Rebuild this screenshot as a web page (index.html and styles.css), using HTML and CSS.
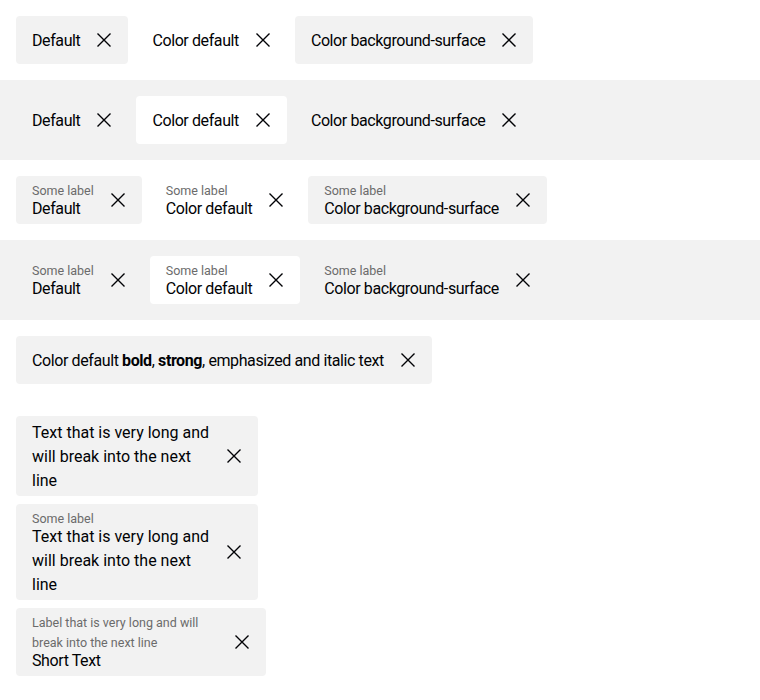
FILE: index.html
```html
<!DOCTYPE html>
<html lang="en">
<head>
<meta charset="utf-8">
<link rel="stylesheet" href="styles.css">
</head>
<body>
<div class="section">
  <button class="tag tag--surface"><span class="content"><span class="text">Default</span></span><svg class="x" viewBox="0 0 24 24"><path d="M5.5 5.5l13 13M18.5 5.5l-13 13"/></svg></button>
  <button class="tag tag--base"><span class="content"><span class="text">Color default</span></span><svg class="x" viewBox="0 0 24 24"><path d="M5.5 5.5l13 13M18.5 5.5l-13 13"/></svg></button>
  <button class="tag tag--surface"><span class="content"><span class="text">Color background-surface</span></span><svg class="x" viewBox="0 0 24 24"><path d="M5.5 5.5l13 13M18.5 5.5l-13 13"/></svg></button>
</div>
<div class="section section--grey">
  <button class="tag tag--surface"><span class="content"><span class="text">Default</span></span><svg class="x" viewBox="0 0 24 24"><path d="M5.5 5.5l13 13M18.5 5.5l-13 13"/></svg></button>
  <button class="tag tag--base"><span class="content"><span class="text">Color default</span></span><svg class="x" viewBox="0 0 24 24"><path d="M5.5 5.5l13 13M18.5 5.5l-13 13"/></svg></button>
  <button class="tag tag--surface"><span class="content"><span class="text">Color background-surface</span></span><svg class="x" viewBox="0 0 24 24"><path d="M5.5 5.5l13 13M18.5 5.5l-13 13"/></svg></button>
</div>
<div class="section">
  <button class="tag tag--surface"><span class="content"><span class="label">Some label</span><span class="text">Default</span></span><svg class="x" viewBox="0 0 24 24"><path d="M5.5 5.5l13 13M18.5 5.5l-13 13"/></svg></button>
  <button class="tag tag--base"><span class="content"><span class="label">Some label</span><span class="text">Color default</span></span><svg class="x" viewBox="0 0 24 24"><path d="M5.5 5.5l13 13M18.5 5.5l-13 13"/></svg></button>
  <button class="tag tag--surface"><span class="content"><span class="label">Some label</span><span class="text">Color background-surface</span></span><svg class="x" viewBox="0 0 24 24"><path d="M5.5 5.5l13 13M18.5 5.5l-13 13"/></svg></button>
</div>
<div class="section section--grey">
  <button class="tag tag--surface"><span class="content"><span class="label">Some label</span><span class="text">Default</span></span><svg class="x" viewBox="0 0 24 24"><path d="M5.5 5.5l13 13M18.5 5.5l-13 13"/></svg></button>
  <button class="tag tag--base"><span class="content"><span class="label">Some label</span><span class="text">Color default</span></span><svg class="x" viewBox="0 0 24 24"><path d="M5.5 5.5l13 13M18.5 5.5l-13 13"/></svg></button>
  <button class="tag tag--surface"><span class="content"><span class="label">Some label</span><span class="text">Color background-surface</span></span><svg class="x" viewBox="0 0 24 24"><path d="M5.5 5.5l13 13M18.5 5.5l-13 13"/></svg></button>
</div>
<div class="section">
  <button class="tag tag--surface"><span class="content"><span class="text">Color default <b>bold</b>, <strong>strong</strong>, <em>emphasized</em> and <i>italic</i> text</span></span><svg class="x" viewBox="0 0 24 24"><path d="M5.5 5.5l13 13M18.5 5.5l-13 13"/></svg></button>
</div>
<div class="section section--stack">
  <button class="tag tag--surface tag--narrow"><span class="content"><span class="text">Text that is very long and will break into the next line</span></span><svg class="x" viewBox="0 0 24 24"><path d="M5.5 5.5l13 13M18.5 5.5l-13 13"/></svg></button>
  <button class="tag tag--surface tag--narrow"><span class="content"><span class="label">Some label</span><span class="text">Text that is very long and will break into the next line</span></span><svg class="x" viewBox="0 0 24 24"><path d="M5.5 5.5l13 13M18.5 5.5l-13 13"/></svg></button>
  <button class="tag tag--surface tag--wide"><span class="content"><span class="label">Label that is very long and will break into the next line</span><span class="text">Short Text</span></span><svg class="x" viewBox="0 0 24 24"><path d="M5.5 5.5l13 13M18.5 5.5l-13 13"/></svg></button>
</div>
</body>
</html>
```

FILE: styles.css
```css
html, body {
  margin: 0;
  padding: 0;
  background: #ffffff;
}

body {
  font-family: Roboto, "Liberation Sans", sans-serif;
  color: #010205;
}

.section {
  display: flex;
  flex-wrap: wrap;
  align-items: flex-start;
  gap: 8px;
  padding: 16px;
}

.section--grey {
  background: #f2f2f2;
}

.section--stack {
  flex-direction: column;
}

.tag {
  display: flex;
  align-items: center;
  gap: 12px;
  min-height: 48px;
  padding: 5px 12px 3px 16px;
  border: 0;
  border-radius: 4px;
  margin: 0;
  font: inherit;
  color: inherit;
  text-align: left;
  cursor: pointer;
  box-sizing: border-box;
}

.tag--surface {
  background: #f2f2f2;
}

.tag--base {
  background: #ffffff;
}

.tag--narrow {
  width: 242px;
}

.tag--wide {
  width: 250px;
}

.content {
  display: flex;
  flex-direction: column;
  flex: 1 1 auto;
  min-width: 0;
}

.label {
  display: block;
  font-size: 12.5px;
  line-height: 20px;
  color: #6b6b6b;
  margin-bottom: -4px;
}

.text {
  display: block;
  font-size: 16px;
  line-height: 24px;
  letter-spacing: -0.4px;
}

.tag--narrow .text {
  letter-spacing: 0;
}

.text em,
.text i {
  font-style: normal;
}

.text b,
.text strong {
  font-weight: 700;
}

.x {
  flex: 0 0 24px;
  width: 24px;
  height: 24px;
  margin-top: -2px;
  fill: none;
  stroke: #010205;
  stroke-width: 1.4;
}
```
